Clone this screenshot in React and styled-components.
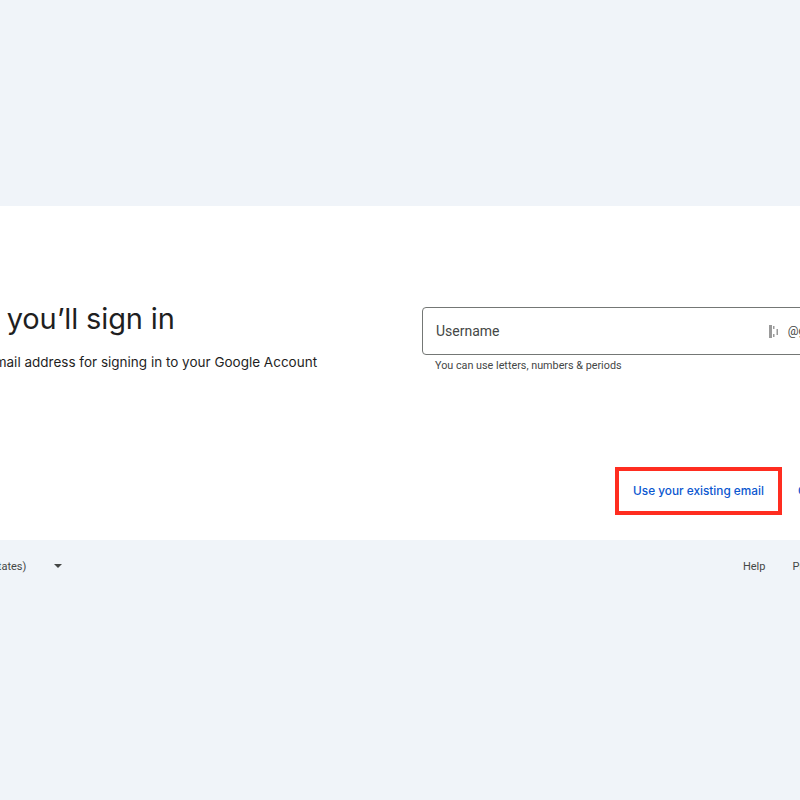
import styled, { createGlobalStyle } from "styled-components";

const GlobalStyle = createGlobalStyle`
	html, body {
		margin: 0;
		padding: 0;
		background: #f0f4f9;
		font-family: "Roboto", "Liberation Sans", sans-serif;
	}
`;

function App() {
	return (
		<Page>
			<GlobalStyle />
			<Card>
				<Intro>
					<Heading>How you’ll sign in</Heading>
					<Subtitle>Create a Gmail address for signing in to your Google Account</Subtitle>
				</Intro>
				<Form>
					<Field>
						<FieldLabel>Username</FieldLabel>
						<Suffix>
							<svg width="10" height="13" viewBox="0 0 10 13" fill="#9a9a9a">
								<rect x="0" y="0" width="3" height="13" />
								<rect x="4" y="1" width="1.5" height="3" />
								<rect x="4" y="9" width="1.5" height="3" />
								<rect x="7.5" y="4" width="1.5" height="6" />
							</svg>
							@gmail.com
						</Suffix>
					</Field>
					<Hint>You can use letters, numbers &amp; periods</Hint>
				</Form>
				<Actions>
					<Highlight>
						<TextButton>Use your existing email</TextButton>
					</Highlight>
					<TextButton>Create</TextButton>
				</Actions>
			</Card>
			<Footer>
				<Language>
					English (United States)
					<Caret />
				</Language>
				<FooterLinks>
					<FooterLink>Help</FooterLink>
					<FooterLink>Privacy</FooterLink>
				</FooterLinks>
			</Footer>
		</Page>
	);
}

export default App;

const Page = styled.div`
	width: 800px;
	height: 800px;
	padding-top: 206px;
	box-sizing: border-box;
	overflow: hidden;
	background: #f0f4f9;
`;

const Card = styled.div`
	height: 334px;
	box-sizing: border-box;
	background: #fff;
	display: grid;
	grid-template-columns: 422px 1fr;
	grid-template-rows: 261px 1fr;
	overflow: hidden;
`;

const Intro = styled.div`
	margin-left: -73px;
	padding-top: 94px;
	white-space: nowrap;
	color: #1f1f1f;
	font-family: "Inter", "Liberation Sans", sans-serif;
`;

const Heading = styled.h1`
	margin: 0 0 0 10px;
	font-size: 29px;
	line-height: 38px;
	font-weight: 400;
	letter-spacing: -0.15px;
`;

const Subtitle = styled.p`
	margin: 14px 0 0;
	font-size: 13.5px;
	line-height: 20px;
`;

const Form = styled.div`
	padding-top: 101px;
`;

const Field = styled.div`
	width: 447px;
	height: 48px;
	box-sizing: border-box;
	border: 1px solid #747775;
	border-radius: 4px;
	padding: 0 13px;
	display: flex;
	align-items: center;
	justify-content: space-between;
`;

const FieldLabel = styled.span`
	font-size: 14px;
	color: #444746;
`;

const Suffix = styled.span`
	display: flex;
	align-items: center;
	gap: 9px;
	font-size: 12px;
	color: #444746;
	white-space: nowrap;
`;

const Hint = styled.div`
	margin: 4px 0 0 13px;
	font-size: 10.8px;
	line-height: 14px;
	color: #444746;
`;

const Actions = styled.div`
	grid-column: 1 / -1;
	display: flex;
	align-items: center;
	align-self: start;
	gap: 16px;
	padding: 0 0 0 615px;
	white-space: nowrap;
	font-family: "Inter", "Liberation Sans", sans-serif;
`;

const Highlight = styled.div`
	border: 4px solid #ff2d20;
	width: 167px;
	height: 48px;
	box-sizing: border-box;
	display: flex;
	align-items: center;
	justify-content: center;
`;

const TextButton = styled.span`
	font-size: 11.8px;
	font-weight: 500;
	color: #0b57d0;
	line-height: 40px;
`;

const Footer = styled.div`
	display: flex;
	justify-content: space-between;
	align-items: center;
	height: 52px;
	margin-left: -85px;
	font-size: 11px;
	color: #444746;
	white-space: nowrap;
`;

const Language = styled.div`
	display: flex;
	align-items: center;
	gap: 28px;
`;

const Caret = styled.span`
	width: 0;
	height: 0;
	border-left: 4px solid transparent;
	border-right: 4px solid transparent;
	border-top: 4px solid #444746;
`;

const FooterLinks = styled.div`
	display: flex;
	gap: 27px;
	margin-right: -28px;
`;

const FooterLink = styled.span``;
